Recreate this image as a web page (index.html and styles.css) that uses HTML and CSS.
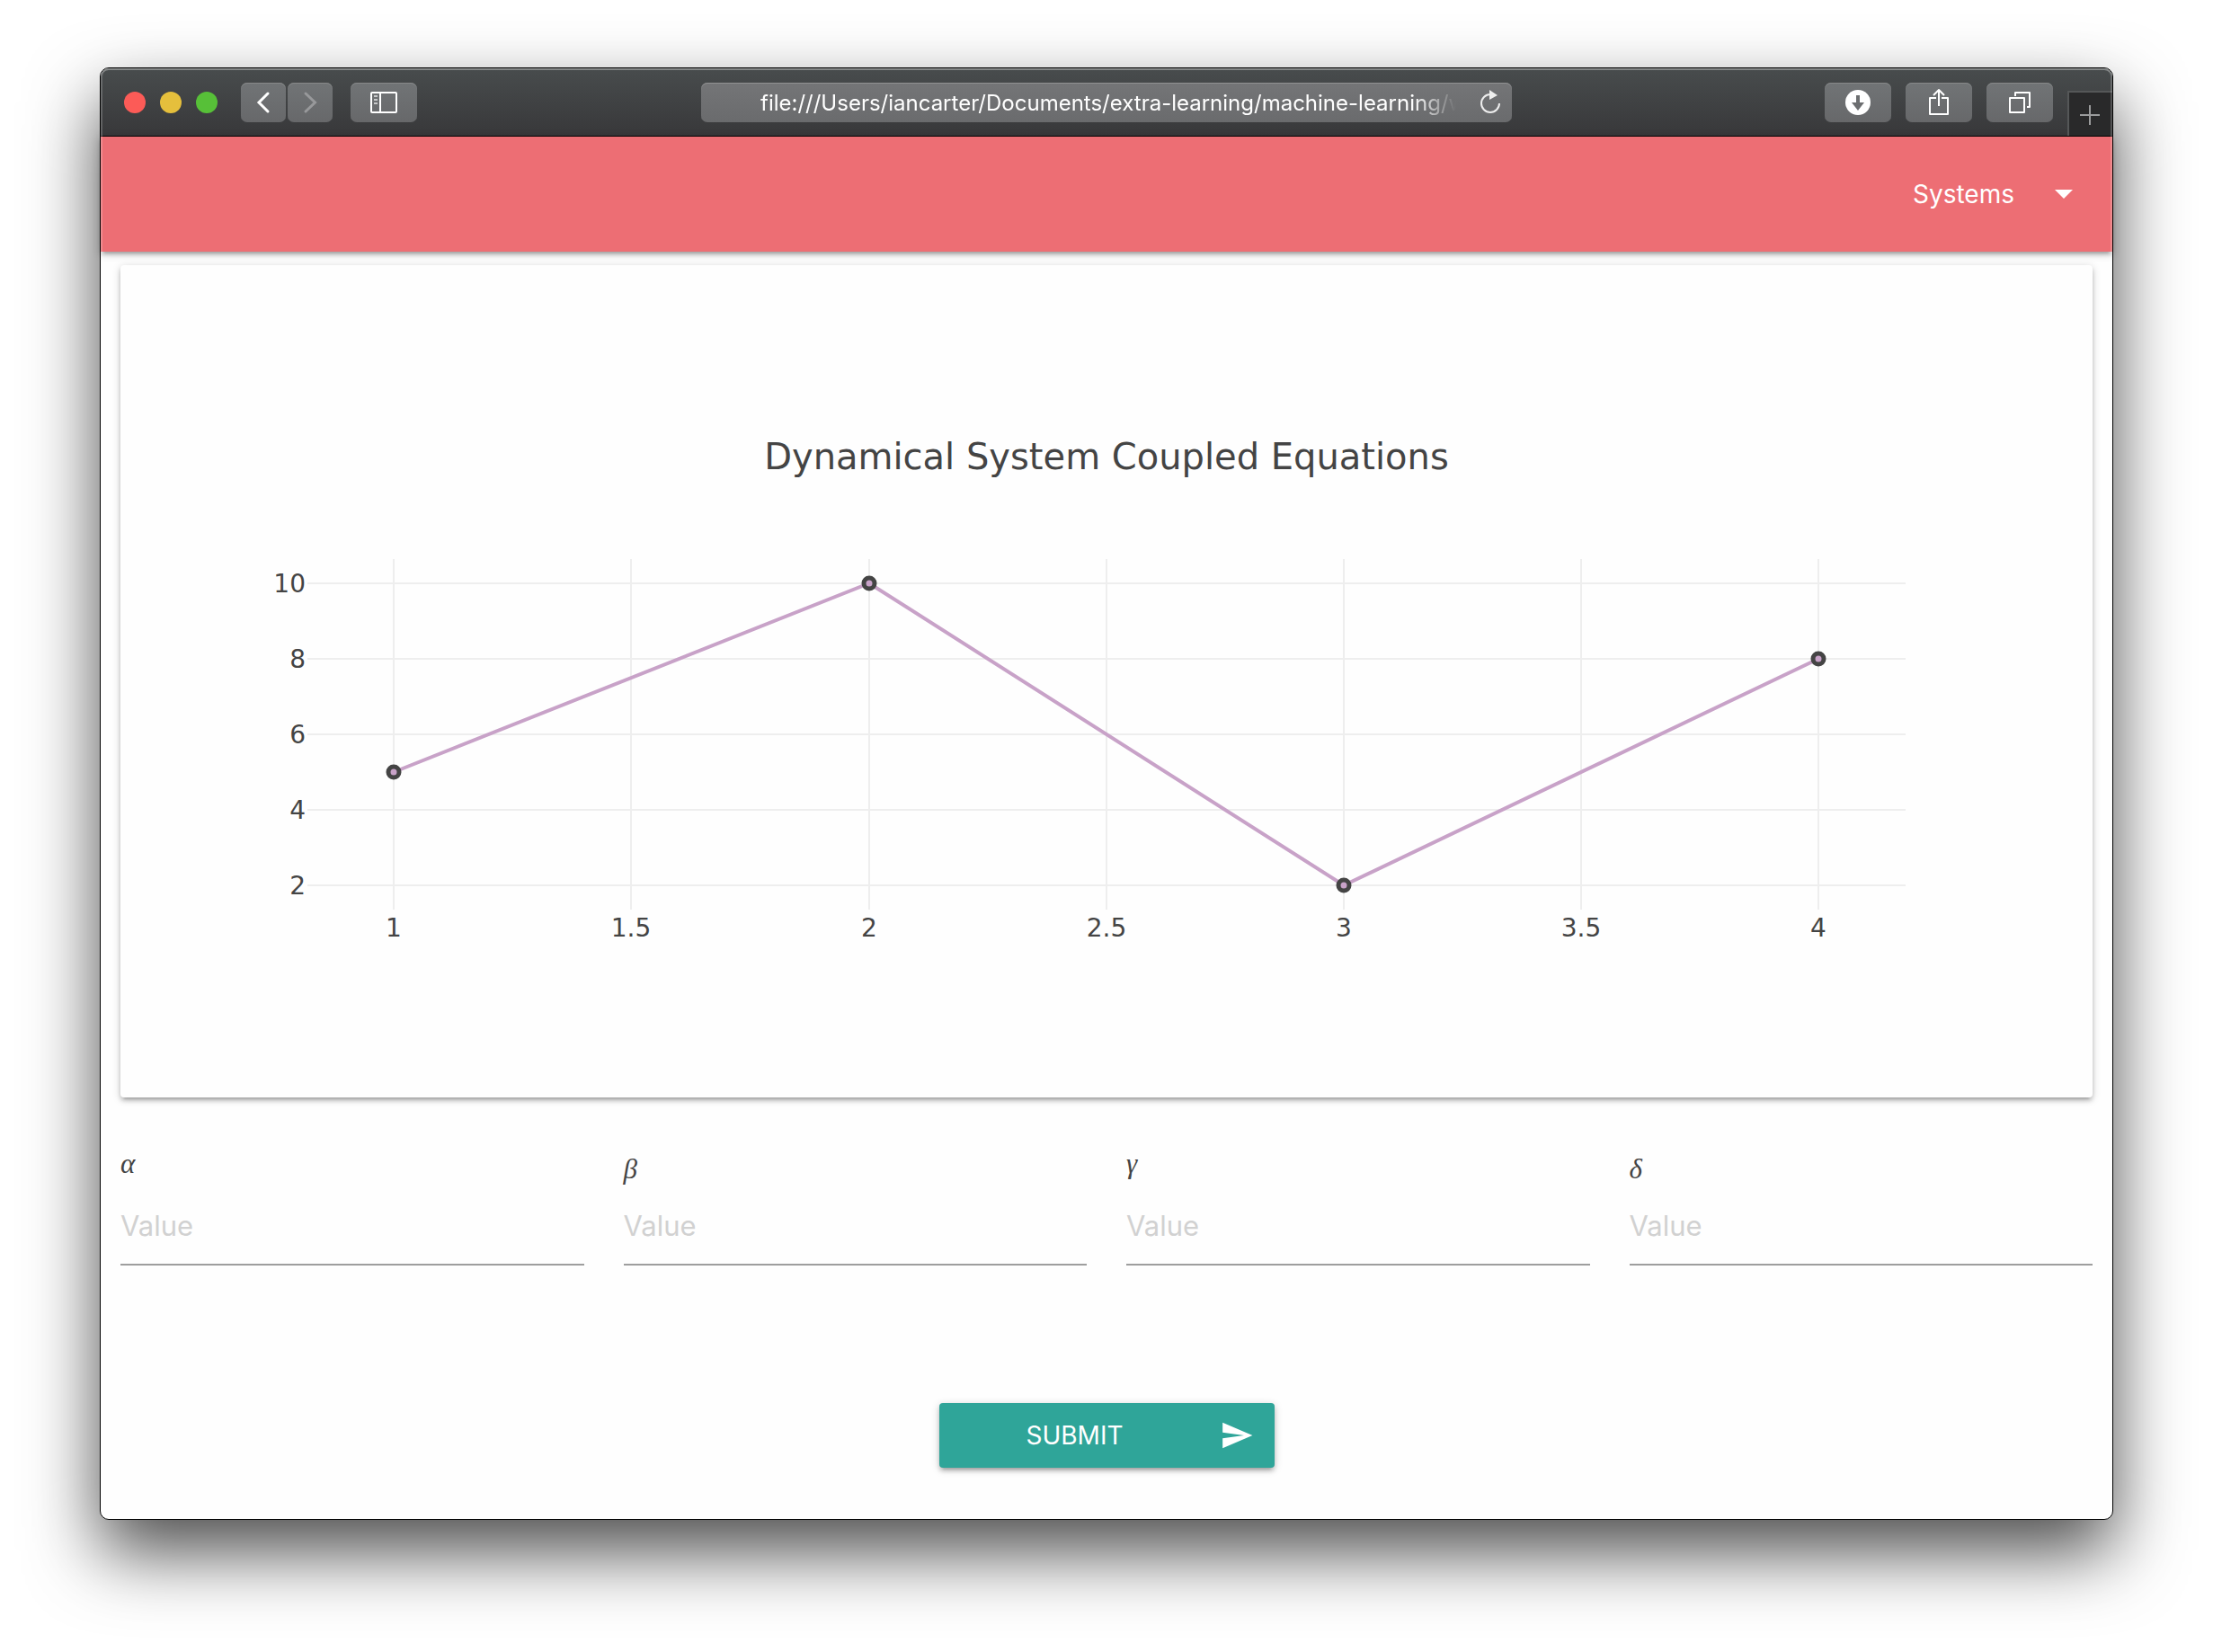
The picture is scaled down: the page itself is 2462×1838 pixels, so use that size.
FILE: index.html
```html
<!DOCTYPE html>
<html lang="en">
<head>
<meta charset="utf-8">
<meta name="viewport" content="width=device-width, initial-scale=1">
<title>Dynamical System Coupled Equations</title>
<link rel="stylesheet" href="styles.css">
</head>
<body>
<div class="window">
  <div class="toolbar">
    <div class="toolbar-left">
      <div class="lights">
        <button class="light light-close" aria-label="Close"></button>
        <button class="light light-min" aria-label="Minimize"></button>
        <button class="light light-zoom" aria-label="Zoom"></button>
      </div>
      <div class="history">
        <button class="tool tool-small" aria-label="Back">
          <svg width="50" height="44" viewBox="0 0 50 44"><path d="M30 12L20 22L30 32" fill="none" stroke="#fff" stroke-width="3" stroke-linecap="round"/></svg>
        </button>
        <button class="tool tool-small" aria-label="Forward">
          <svg width="50" height="44" viewBox="0 0 50 44"><path d="M20 12L30.500 22L20 32" fill="none" stroke="#98999b" stroke-width="3" stroke-linecap="round"/></svg>
        </button>
      </div>
      <button class="tool" aria-label="Show sidebar">
        <svg width="74" height="44" viewBox="0 0 74 44"><rect x="23" y="11" width="28" height="22" rx="1" fill="none" stroke="#fff" stroke-width="2"/><path d="M33 11V33" stroke="#fff" stroke-width="2"/><path d="M26 15H30M26 19H30M26 23H30" stroke="#c8c9ca" stroke-width="2"/></svg>
      </button>
    </div>
    <div class="address">
      <input class="address-input" type="text" aria-label="Address" value="file:///Users/iancarter/Documents/extra-learning/machine-learning/web">
      <button class="reload" aria-label="Reload">
        <svg width="28" height="32" viewBox="0 0 28 32"><path d="M24 17A10 10 0 1 1 14 7" fill="none" stroke="#eee" stroke-width="2"/><path d="M13 2L22 8L13 13Z" fill="#eee"/></svg>
      </button>
    </div>
    <div class="toolbar-right">
      <button class="tool" aria-label="Downloads">
        <svg width="74" height="44" viewBox="0 0 74 44"><circle cx="37" cy="22" r="14" fill="#fff"/><path d="M35 14H39V22H44L37 31L30 22H35Z" fill="#6c6e70"/></svg>
      </button>
      <button class="tool" aria-label="Share">
        <svg width="74" height="44" viewBox="0 0 74 44" fill="none" stroke="#fff" stroke-width="2" stroke-linejoin="round"><path d="M34 17H27V35H47V17H40"/><path d="M37 8V26M31 14L37 8L43 14"/></svg>
      </button>
      <button class="tool" aria-label="Show tabs">
        <svg width="74" height="44" viewBox="0 0 74 44" fill="none" stroke="#fff" stroke-width="2" stroke-linejoin="round"><rect x="26" y="17" width="16" height="16"/><path d="M32 15V11H48V27H45"/></svg>
      </button>
      <button class="new-tab" aria-label="New tab">
        <svg width="48" height="48" viewBox="0 0 48 48"><path d="M12 25H34M23 14V36" stroke="#9a9b9c" stroke-width="2"/></svg>
      </button>
    </div>
  </div>

  <nav class="navbar">
    <a class="dropdown" href="#systems">Systems
      <svg width="20" height="10" viewBox="0 0 20 10"><path d="M0 0H20L10 10Z" fill="#fff"/></svg>
    </a>
  </nav>

  <main class="content">
    <section class="card">
      <svg class="chart" viewBox="0 0 2194 926" role="img" aria-label="Dynamical System Coupled Equations">
        <path class="grid" d="M304 327V717M568 327V717M833 327V717M1097 327V717M1361 327V717M1625 327V717M1889 327V717M208 354H1986M208 438H1986M208 522H1986M208 606H1986M208 690H1986"/>
        <path class="trace" d="M304 564L833 354L1361 690L1889 438"/>
        <g class="points">
          <circle cx="304" cy="564" r="6"/><circle cx="833" cy="354" r="6"/><circle cx="1361" cy="690" r="6"/><circle cx="1889" cy="438" r="6"/>
        </g>
        <text class="chart-title" x="1097" y="227">Dynamical System Coupled Equations</text>
        <g class="ticks ticks-y">
          <text x="206" y="364">10</text><text x="206" y="448">8</text><text x="206" y="532">6</text><text x="206" y="616">4</text><text x="206" y="700">2</text>
        </g>
        <g class="ticks ticks-x">
          <text x="304" y="747">1</text><text x="568" y="747">1.5</text><text x="833" y="747">2</text><text x="1097" y="747">2.5</text><text x="1361" y="747">3</text><text x="1625" y="747">3.5</text><text x="1889" y="747">4</text>
        </g>
      </svg>
    </section>

    <form class="params">
      <div class="fields">
        <div class="field"><label class="symbol" for="alpha">α</label><input class="value" id="alpha" type="text" placeholder="Value"></div>
        <div class="field"><label class="symbol symbol-tall" for="beta">β</label><input class="value" id="beta" type="text" placeholder="Value"></div>
        <div class="field"><label class="symbol" for="gamma">γ</label><input class="value" id="gamma" type="text" placeholder="Value"></div>
        <div class="field"><label class="symbol symbol-tall" for="delta">δ</label><input class="value" id="delta" type="text" placeholder="Value"></div>
      </div>
      <button class="submit" type="submit">
        <span>SUBMIT</span>
        <svg width="38" height="38" viewBox="0 0 24 24"><path d="M2.010 21L23 12 2.010 3 2 10l15 2-15 2z" fill="#fff"/></svg>
      </button>
    </form>
  </main>
</div>
</body>
</html>
```
FILE: styles.css
```css
*, *::before, *::after { box-sizing: border-box; }

body {
  margin: 0;
  padding: 75px 111px 147px;
  background: #fff;
  font-family: Inter, "Liberation Sans", sans-serif;
}

button, input { font: inherit; }
button { border: 0; padding: 0; cursor: pointer; }
svg { display: block; }

.window {
  position: relative;
  border: 1px solid #000;
  border-radius: 10px;
  background: #fefefe;
  box-shadow: 0 36px 80px rgba(0, 0, 0, .7);
}

/* light rim along the inner edge of the window */
.window::after {
  content: "";
  position: absolute;
  inset: 0;
  border: 2px solid rgba(255, 255, 255, .2);
  border-radius: 9px;
  pointer-events: none;
}

/* browser toolbar */
.toolbar {
  display: grid;
  grid-template-columns: 1fr minmax(0, 902px) 1fr;
  align-items: center;
  height: 76px;
  border-bottom: 1px solid #000;
  border-radius: 9px 9px 0 0;
  background: linear-gradient(#484c4d, #38383a);
  box-shadow: inset 0 2px 0 #66696a;
}

.toolbar-left { display: flex; align-items: center; padding-left: 26px; }
.lights { display: flex; gap: 16px; margin-right: 26px; }
.light { width: 24px; height: 24px; border-radius: 50%; }
.light-close { background: #fc5b57; }
.light-min { background: #e5bf3c; }
.light-zoom { background: #57c038; }
.history { display: flex; gap: 2px; margin-right: 20px; }

.tool {
  width: 74px;
  height: 44px;
  border-radius: 7px;
  background: linear-gradient(#717476, #67686a);
  box-shadow: inset 0 1px 0 #868889;
}
.tool-small { width: 50px; }

.address {
  display: flex;
  align-items: center;
  height: 44px;
  padding: 0 10px 0 66px;
  border-radius: 7px;
  background: linear-gradient(#747577, #6a6b6d);
  box-shadow: inset 0 1px 0 #909192;
}
.address-input {
  flex: 1;
  min-width: 0;
  height: 44px;
  margin-right: 24px;
  padding: 2px 0 0;
  border: 0;
  outline: 0;
  background: none;
  color: #fff;
  font-size: 24px;
  -webkit-mask-image: linear-gradient(to left, transparent, #000 48px);
  mask-image: linear-gradient(to left, transparent, #000 48px);
}
.reload { background: none; }

.toolbar-right {
  display: flex;
  align-self: stretch;
  justify-content: flex-end;
  align-items: center;
  gap: 16px;
}
.new-tab {
  align-self: flex-end;
  width: 50px;
  height: 50px;
  border-top: 2px solid #555758;
  border-left: 2px solid #555758;
  background: #29292a;
}

/* page header */
.navbar {
  display: flex;
  justify-content: flex-end;
  align-items: center;
  height: 128px;
  padding-right: 44px;
  background: #ed6e74;
  box-shadow: 0 4px 4px rgba(0, 0, 0, .14), 0 6px 2px -4px rgba(0, 0, 0, .12), 0 2px 10px rgba(0, 0, 0, .2);
}
.dropdown {
  display: flex;
  align-items: center;
  gap: 45px;
  color: #fff;
  font-size: 28px;
  text-decoration: none;
}

/* chart card */
.content { padding: 15px 22px 57px; }
.card {
  border-radius: 4px;
  background: #fefefe;
  box-shadow: 0 4px 4px rgba(0, 0, 0, .14), 0 6px 2px -4px rgba(0, 0, 0, .12), 0 2px 10px rgba(0, 0, 0, .2);
}
.chart { width: 100%; height: auto; font-family: "DejaVu Sans", Verdana, sans-serif; fill: #444; }
.grid { fill: none; stroke: #eee; stroke-width: 2; }
.trace { fill: none; stroke: #c8a2c8; stroke-width: 4; }
.points { fill: #c8a2c8; stroke: #444; stroke-width: 5; }
.chart-title { font-size: 40px; text-anchor: middle; }
.ticks { font-size: 28px; }
.ticks-x { text-anchor: middle; }
.ticks-y { text-anchor: end; }

/* parameter form */
.params { display: flex; flex-direction: column; align-items: center; margin-top: 58px; }
.fields { display: grid; grid-template-columns: repeat(4, 1fr); gap: 44px; width: 100%; }
.field { display: flex; flex-direction: column; }
.symbol {
  height: 41px;
  color: #444;
  font: italic 31px/32px "Liberation Serif", serif;
}
.symbol-tall { padding-top: 6px; }
.value {
  width: 100%;
  height: 88px;
  padding: 0;
  border: 0;
  border-bottom: 2px solid #9e9e9e;
  border-radius: 0;
  outline: 0;
  background: none;
  font-size: 31px;
}
.value::placeholder { color: #d1d1d1; opacity: 1; }

.submit {
  display: flex;
  justify-content: space-between;
  align-items: center;
  width: 373px;
  height: 72px;
  margin-top: 153px;
  padding: 0 23px 0 97px;
  border-radius: 4px;
  background: #2fa599;
  color: #fff;
  font-size: 28px;
  box-shadow: 0 4px 4px rgba(0, 0, 0, .14), 0 6px 2px -4px rgba(0, 0, 0, .12), 0 2px 10px rgba(0, 0, 0, .2);
}
```
